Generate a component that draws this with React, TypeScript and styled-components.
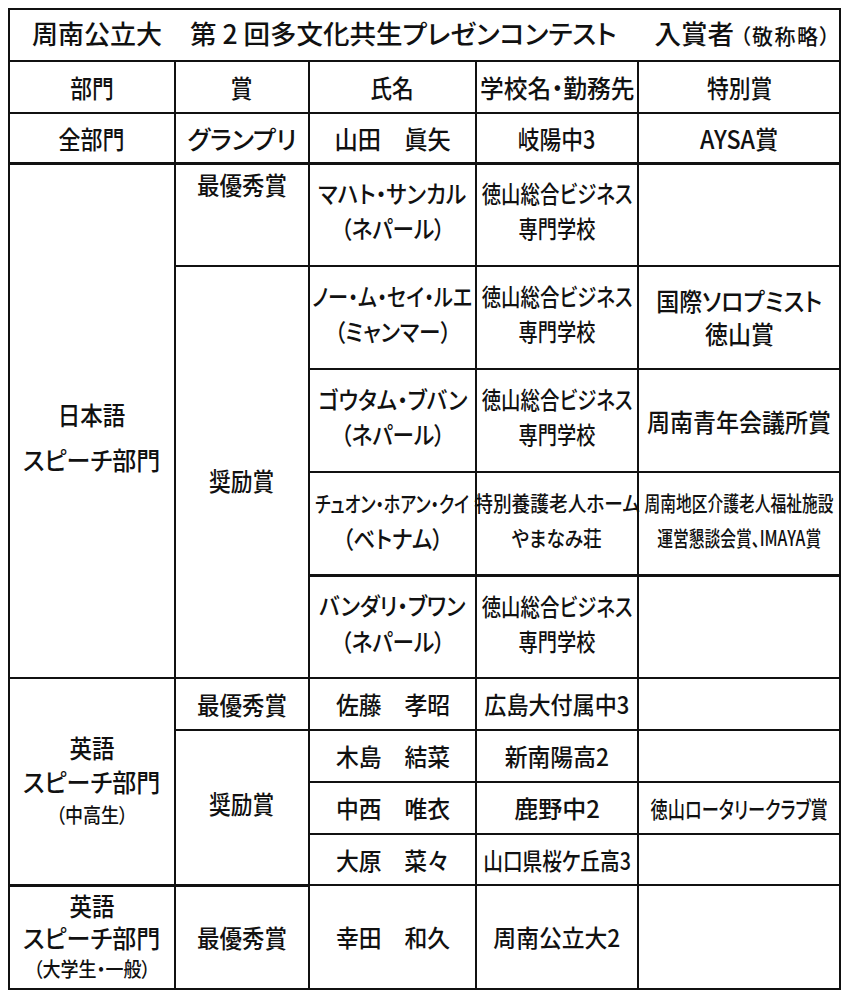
import React from "react";
import styled, { createGlobalStyle, css } from "styled-components";

const GlobalStyle = createGlobalStyle`
  html, body { margin: 0; padding: 0; background: #ffffff; }
  body {
    padding: 8px;
    font-family: "Noto Sans CJK JP", "Noto Sans", sans-serif;
    font-weight: 500;
    color: #111111;
  }
`;

const Table = styled.table`
  border-collapse: collapse;
  table-layout: fixed;
  width: 831px;
  font-feature-settings: "palt";
`;

const Col = styled.col<{ $w: number }>`
  width: ${(p) => p.$w}px;
`;

const Row = styled.tr<{ $h: number }>`
  height: ${(p) => p.$h}px;
`;

const TitleCell = styled.th`
  border: 2px solid #111;
  padding: 0 0 2px 22px;
  font-weight: 500;
  text-align: left;
`;

const TitleBar = styled.div`
  display: flex;
  align-items: baseline;
  white-space: nowrap;
  line-height: 46px;
`;

const TitlePart = styled.span<{ $size?: number; $gap?: number; $ls?: number }>`
  font-size: ${(p) => p.$size ?? 26}px;
  margin-left: ${(p) => p.$gap ?? 0}px;
  letter-spacing: ${(p) => p.$ls ?? 0}px;
`;

const Cell = styled.td<{
  $valign?: "top" | "middle";
  $pt?: number;
  $pb?: number;
  $thickBottom?: boolean;
}>`
  border: 2px solid #111;
  padding: ${(p) => p.$pt ?? 0}px 0 ${(p) => p.$pb ?? 0}px 0;
  vertical-align: ${(p) => p.$valign ?? "middle"};
  text-align: center;
  overflow: visible;
  ${(p) =>
    p.$thickBottom &&
    css`
      border-bottom-width: 3px;
    `}
`;

const Stack = styled.div<{ $lh?: number }>`
  display: flex;
  flex-direction: column;
  align-items: center;
  line-height: ${(p) => p.$lh ?? 34}px;
  white-space: nowrap;
`;

const Line = styled.span<{ $size?: number; $sx?: number }>`
  display: inline-block;
  font-size: ${(p) => p.$size ?? 25}px;
  transform: scaleX(${(p) => p.$sx ?? 0.88});
  transform-origin: center;
`;

type TextProps = {
  lines: string[];
  size?: number;
  sx?: number;
  lh?: number;
  sizes?: number[];
  sxs?: number[];
};

const Text = ({ lines, size, sx, lh, sizes, sxs }: TextProps) => (
  <Stack $lh={lh}>
    {lines.map((l, i) => (
      <Line key={i} $size={sizes ? sizes[i] : size} $sx={sxs ? sxs[i] : sx}>
        {l}
      </Line>
    ))}
  </Stack>
);

const NAME = 24;
const SCHOOL = 24;

const School = () => (
  <Text lines={["徳山総合ビジネス", "専門学校"]} size={SCHOOL} lh={35} sxs={[0.81, 0.8]} />
);

const App = () => (
  <>
    <GlobalStyle />
    <Table>
      <colgroup>
        <Col $w={166} />
        <Col $w={134} />
        <Col $w={167} />
        <Col $w={162} />
        <Col $w={202} />
      </colgroup>
      <tbody>
        <Row $h={51}>
          <TitleCell colSpan={5}>
            <TitleBar>
              <TitlePart>周南公立大</TitlePart>
              <TitlePart $size={26.5} $gap={28}>第 2 回多文化共生プレゼンコンテスト</TitlePart>
              <TitlePart $size={26.5} $gap={38}>入賞者</TitlePart>
              <TitlePart $size={21} $gap={6} $ls={1.5}>（敬称略）</TitlePart>
            </TitleBar>
          </TitleCell>
        </Row>
        <Row $h={52}>
          <Cell><Text lines={["部門"]} sx={0.87} /></Cell>
          <Cell><Text lines={["賞"]} /></Cell>
          <Cell><Text lines={["氏名"]} sx={0.87} /></Cell>
          <Cell><Text lines={["学校名・勤務先"]} sx={0.95} /></Cell>
          <Cell><Text lines={["特別賞"]} sx={0.87} /></Cell>
        </Row>
        <Row $h={50}>
          <Cell $thickBottom><Text lines={["全部門"]} sx={0.88} /></Cell>
          <Cell $thickBottom><Text lines={["グランプリ"]} sx={1} /></Cell>
          <Cell $thickBottom><Text lines={["山田　眞矢"]} sx={0.93} /></Cell>
          <Cell $thickBottom><Text lines={["岐陽中3"]} sx={0.87} /></Cell>
          <Cell $thickBottom><Text lines={["AYSA賞"]} sx={0.93} /></Cell>
        </Row>

        <Row $h={103}>
          <Cell rowSpan={5} $pt={32}>
            <Text lines={["日本語", "スピーチ部門"]} lh={45} sxs={[0.9, 0.96]} />
          </Cell>
          <Cell $valign="top" $pt={2}>
            <Text lines={["最優秀賞"]} sx={0.9} />
          </Cell>
          <Cell $pb={10}><Text lines={["マハト・サンカル", "（ネパール）"]} size={NAME} lh={35} sx={0.9} /></Cell>
          <Cell $pb={10}><School /></Cell>
          <Cell />
        </Row>
        <Row $h={103}>
          <Cell rowSpan={4} $pt={16}>
            <Text lines={["奨励賞"]} sx={0.87} />
          </Cell>
          <Cell $pb={10}><Text lines={["ノー・ム・セイ・ルエ", "（ミャンマー）"]} size={NAME} lh={35} sxs={[0.84, 0.9]} /></Cell>
          <Cell $pb={10}><School /></Cell>
          <Cell $pb={2}><Text lines={["国際ソロプミスト", "徳山賞"]} lh={33} sx={0.92} /></Cell>
        </Row>
        <Row $h={103}>
          <Cell $pb={10}><Text lines={["ゴウタム・ブバン", "（ネパール）"]} size={NAME} lh={35} sx={0.9} /></Cell>
          <Cell $pb={10}><School /></Cell>
          <Cell><Text lines={["周南青年会議所賞"]} sx={0.92} /></Cell>
        </Row>
        <Row $h={103}>
          <Cell $thickBottom $pb={6}><Text lines={["チュオン・ホアン・クイ", "（ベトナム）"]} sizes={[22, 24]} lh={35} sxs={[0.77, 0.9]} /></Cell>
          <Cell $thickBottom $pb={6}><Text lines={["特別養護老人ホーム", "やまなみ荘"]} size={21} lh={35} sx={0.89} /></Cell>
          <Cell $thickBottom $pb={6}><Text lines={["周南地区介護老人福祉施設", "運営懇談会賞、IMAYA賞"]} size={21} lh={35} sx={0.75} /></Cell>
        </Row>
        <Row $h={103}>
          <Cell $pb={8}><Text lines={["バンダリ・ブワン", "（ネパール）"]} size={NAME} lh={36} sx={0.9} /></Cell>
          <Cell $pb={8}><School /></Cell>
          <Cell />
        </Row>

        <Row $h={52}>
          <Cell rowSpan={4} $thickBottom>
            <Text lines={["英語", "スピーチ部門", "（中高生）"]} sizes={[25, 25, 20]} lh={34} sxs={[0.9, 0.96, 0.9]} />
          </Cell>
          <Cell><Text lines={["最優秀賞"]} sx={0.9} /></Cell>
          <Cell><Text lines={["佐藤　孝昭"]} size={NAME} sx={0.95} /></Cell>
          <Cell><Text lines={["広島大付属中3"]} size={SCHOOL} sx={0.92} /></Cell>
          <Cell />
        </Row>
        <Row $h={52}>
          <Cell rowSpan={3} $thickBottom $pb={8}>
            <Text lines={["奨励賞"]} sx={0.87} />
          </Cell>
          <Cell><Text lines={["木島　結菜"]} size={NAME} sx={0.95} /></Cell>
          <Cell><Text lines={["新南陽高2"]} size={SCHOOL} sx={0.95} /></Cell>
          <Cell />
        </Row>
        <Row $h={52}>
          <Cell><Text lines={["中西　唯衣"]} size={NAME} sx={0.95} /></Cell>
          <Cell><Text lines={["鹿野中2"]} size={SCHOOL} sx={1} /></Cell>
          <Cell><Text lines={["徳山ロータリークラブ賞"]} size={23} sx={0.75} /></Cell>
        </Row>
        <Row $h={51}>
          <Cell><Text lines={["大原　菜々"]} size={NAME} sx={0.95} /></Cell>
          <Cell><Text lines={["山口県桜ケ丘高3"]} size={SCHOOL} sx={0.82} /></Cell>
          <Cell />
        </Row>

        <Row $h={104}>
          <Cell>
            <Text lines={["英語", "スピーチ部門", "（大学生・一般）"]} sizes={[25, 25, 20]} lh={32} sxs={[0.9, 0.96, 0.9]} />
          </Cell>
          <Cell><Text lines={["最優秀賞"]} sx={0.9} /></Cell>
          <Cell><Text lines={["幸田　和久"]} size={NAME} sx={0.95} /></Cell>
          <Cell><Text lines={["周南公立大2"]} size={SCHOOL} sx={0.95} /></Cell>
          <Cell />
        </Row>
      </tbody>
    </Table>
  </>
);

export default App;
